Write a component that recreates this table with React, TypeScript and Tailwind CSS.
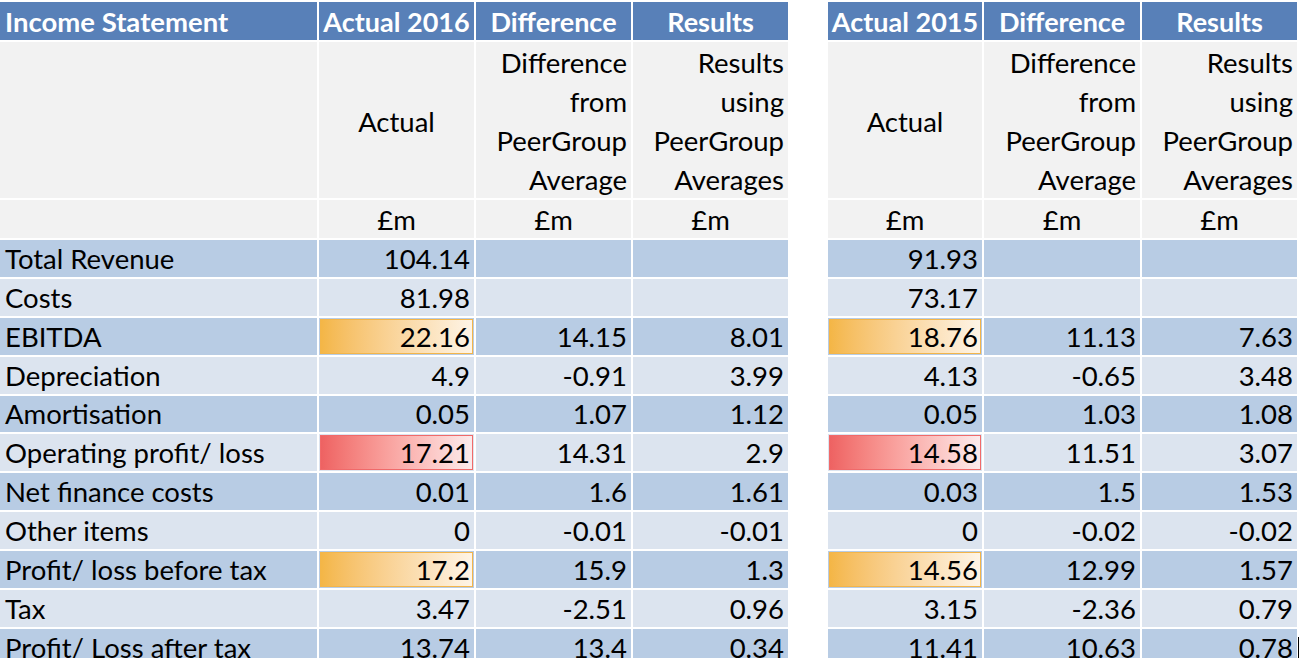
import React from "react";

type Row = {
  label: string;
  y16: string[];
  y15: string[];
  bar?: "orange" | "red";
};

const rows: Row[] = [
  { label: "Total Revenue", y16: ["104.14", "", ""], y15: ["91.93", "", ""] },
  { label: "Costs", y16: ["81.98", "", ""], y15: ["73.17", "", ""] },
  { label: "EBITDA", y16: ["22.16", "14.15", "8.01"], y15: ["18.76", "11.13", "7.63"], bar: "orange" },
  { label: "Depreciation", y16: ["4.9", "-0.91", "3.99"], y15: ["4.13", "-0.65", "3.48"] },
  { label: "Amortisation", y16: ["0.05", "1.07", "1.12"], y15: ["0.05", "1.03", "1.08"] },
  { label: "Operating profit/ loss", y16: ["17.21", "14.31", "2.9"], y15: ["14.58", "11.51", "3.07"], bar: "red" },
  { label: "Net finance costs", y16: ["0.01", "1.6", "1.61"], y15: ["0.03", "1.5", "1.53"] },
  { label: "Other items", y16: ["0", "-0.01", "-0.01"], y15: ["0", "-0.02", "-0.02"] },
  { label: "Profit/ loss before tax", y16: ["17.2", "15.9", "1.3"], y15: ["14.56", "12.99", "1.57"], bar: "orange" },
  { label: "Tax", y16: ["3.47", "-2.51", "0.96"], y15: ["3.15", "-2.36", "0.79"] },
  { label: "Profit/ Loss after tax", y16: ["13.74", "13.4", "0.34"], y15: ["11.41", "10.63", "0.78"] },
];

const head = "flex items-center justify-center bg-[#5880b8] pt-[2px] text-[27px] font-bold text-white whitespace-nowrap overflow-hidden";
const sub = "bg-[#f2f2f2] text-black leading-[39px]";

const ValueCell = ({ value, dark, bar, last }: { value: string; dark: boolean; bar?: "orange" | "red"; last?: boolean }) => (
  <div className={`relative flex items-center justify-end pr-[4px] ${dark ? "bg-[#b8cce4]" : "bg-[#dce4ef]"}`}>
    {bar === "orange" && (
      <div className="absolute inset-[1px] border border-[#f3b54a] bg-gradient-to-r from-[#f4b646] to-[#fef4e6]" />
    )}
    {bar === "red" && (
      <div className="absolute inset-[1px] border border-[#f06a6a] bg-gradient-to-r from-[#ee6262] to-[#fbebec]" />
    )}
    <span className="relative">{value}</span>
    {last && <div className="absolute right-[-2px] top-[8px] h-[24px] w-[1px] bg-black" />}
  </div>
);

const YearTable = ({ year, idx, cols }: { year: string; idx: "y16" | "y15"; cols: string }) => (
  <div className={`grid ${cols} grid-rows-[38px_156px_38px_repeat(11,36.9px)] gap-[2px]`}>
    <div className={head}>Actual {year}</div>
    <div className={head}>Difference</div>
    <div className={head}>Results</div>

    <div className={`${sub} flex items-center justify-center pt-[2px]`}>Actual</div>
    <div className={`${sub} flex flex-col items-end justify-center pr-[4px] pt-[2px]`}>
      <span>Difference</span>
      <span>from</span>
      <span>PeerGroup</span>
      <span>Average</span>
    </div>
    <div className={`${sub} flex flex-col items-end justify-center pr-[4px] pt-[2px]`}>
      <span>Results</span>
      <span>using</span>
      <span>PeerGroup</span>
      <span>Averages</span>
    </div>

    <div className={`${sub} flex items-center justify-center`}>£m</div>
    <div className={`${sub} flex items-center justify-center`}>£m</div>
    <div className={`${sub} flex items-center justify-center`}>£m</div>

    {rows.map((r, i) => (
      <React.Fragment key={r.label}>
        <ValueCell value={r[idx][0]} dark={i % 2 === 0} bar={r.bar} />
        <ValueCell value={r[idx][1]} dark={i % 2 === 0} />
        <ValueCell value={r[idx][2]} dark={i % 2 === 0} last={idx === "y15" && i === rows.length - 1} />
      </React.Fragment>
    ))}
  </div>
);

export default function App() {
  return (
    <div className="h-[658px] w-[1310px] overflow-hidden bg-white font-['Lato',sans-serif] text-[27.5px] text-black">
      <div className="flex pt-[2px]">
        <div className="grid w-[317px] grid-rows-[38px_156px_38px_repeat(11,36.9px)] gap-[2px]">
          <div className="flex items-center bg-[#5880b8] pl-[5px] pt-[2px] font-bold text-white">Income Statement</div>
          <div className="bg-[#f2f2f2]" />
          <div className="bg-[#f2f2f2]" />
          {rows.map((r, i) => (
            <div
              key={r.label}
              className={`flex items-center pl-[5px] whitespace-nowrap ${i % 2 === 0 ? "bg-[#b8cce4]" : "bg-[#dce4ef]"}`}
            >
              {r.label}
            </div>
          ))}
        </div>
        <div className="ml-[2px]">
          <YearTable year="2016" idx="y16" cols="grid-cols-[155px_155px_155px]" />
        </div>
        <div className="ml-[40px]">
          <YearTable year="2015" idx="y15" cols="grid-cols-[154px_156px_155px]" />
        </div>
      </div>
    </div>
  );
}
